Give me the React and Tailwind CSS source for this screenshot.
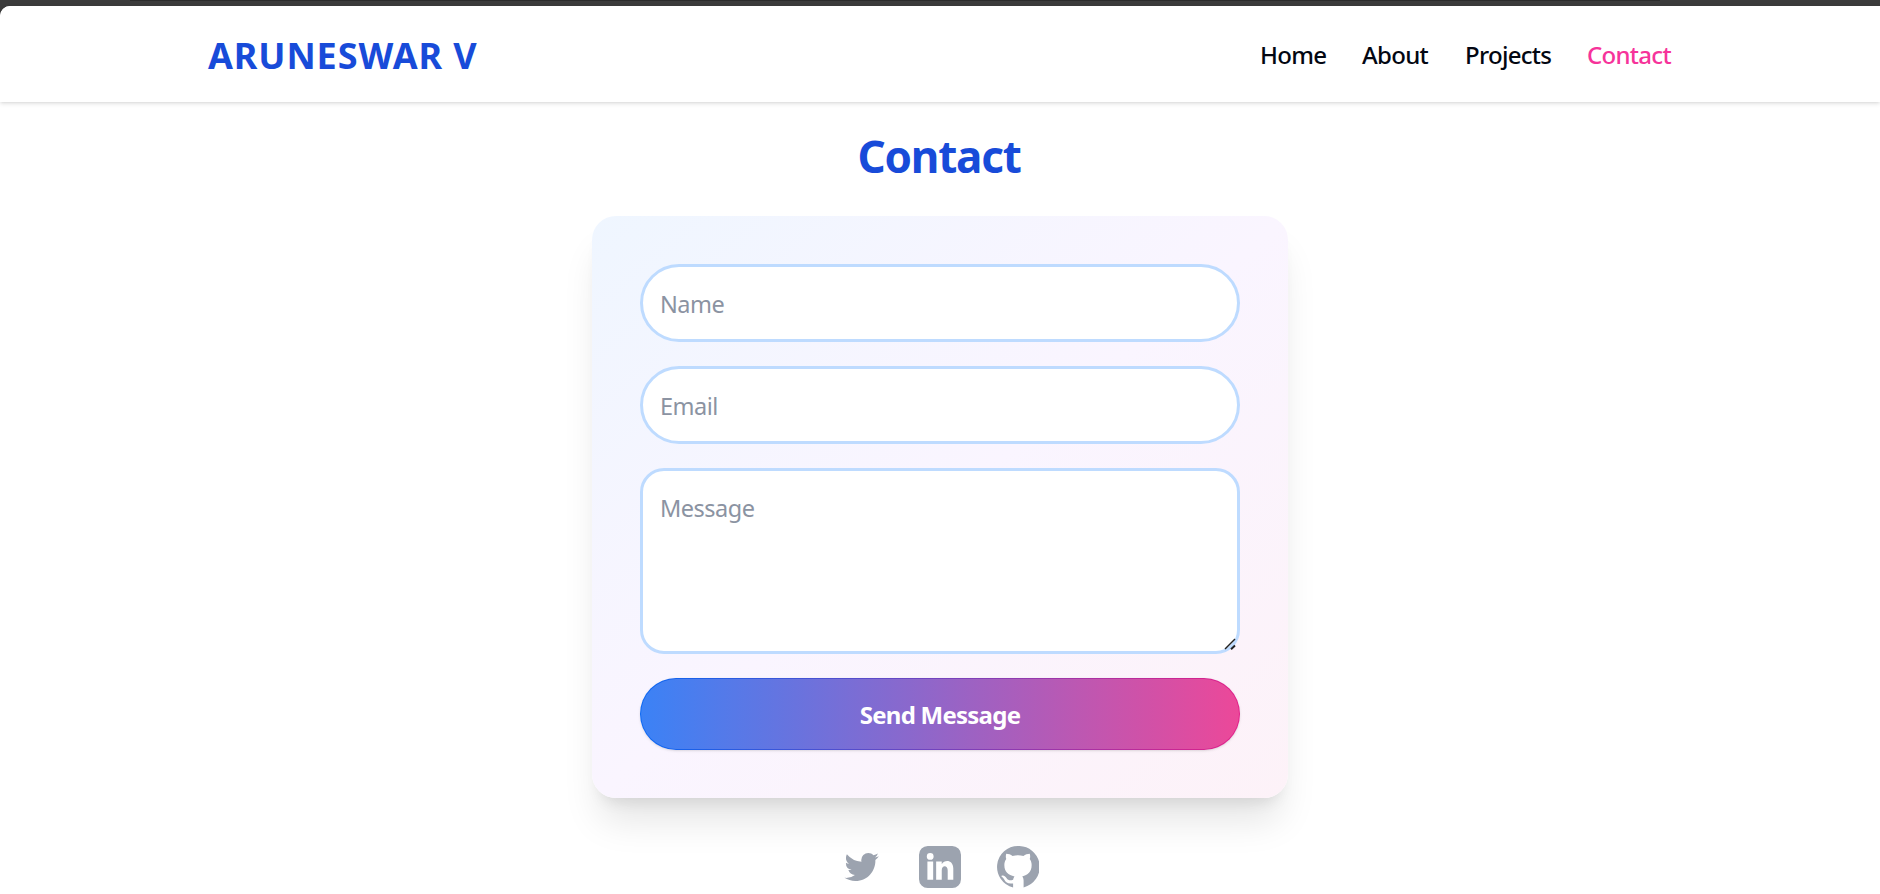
const nav = [
  { label: "Home", cls: "w-[66px]" },
  { label: "About", cls: "w-[67px]" },
  { label: "Projects", cls: "w-[86px]" },
  { label: "Contact", cls: "w-[85px] text-[#f6339a]" },
];

const field =
  "block w-full border-[3px] border-[#bedbff] bg-white px-[17px] text-[23.5px] tracking-[-0.5px] text-[#1e2939] placeholder:text-[#8b93a2] outline-none";

const icons = [
  "M19.633 7.997c.013.175.013.349.013.523 0 5.325-4.053 11.461-11.46 11.461-2.282 0-4.402-.661-6.186-1.809.324.037.636.05.973.05a8.07 8.07 0 0 0 5.001-1.721 4.036 4.036 0 0 1-3.767-2.793c.249.037.499.062.761.062.361 0 .724-.05 1.061-.137a4.027 4.027 0 0 1-3.23-3.953v-.05c.537.299 1.16.486 1.82.511a4.022 4.022 0 0 1-1.796-3.354c0-.748.199-1.434.548-2.032a11.457 11.457 0 0 0 8.306 4.215c-.062-.3-.1-.611-.1-.923a4.026 4.026 0 0 1 4.028-4.028c1.16 0 2.207.486 2.943 1.272a7.957 7.957 0 0 0 2.556-.973 4.02 4.02 0 0 1-1.771 2.22 8.073 8.073 0 0 0 2.319-.624 8.645 8.645 0 0 1-2.019 2.083z",
  "M5 0h14a5 5 0 0 1 5 5v14a5 5 0 0 1-5 5H5a5 5 0 0 1-5-5V5a5 5 0 0 1 5-5zM4.8 8.9v10.4h3.3V8.9zM6.4 4a1.95 1.95 0 1 0 .001 3.901A1.95 1.95 0 0 0 6.4 4zM9.8 8.9v10.4h3.2v-5.5c0-3.1 3.4-3 3.4 0v5.5h3.2v-6.4c0-5-4.9-5.4-6.6-2.5V8.9z",
  "M12 0a12 12 0 0 0-2.8 23.66v-2.3c-2.8.5-4.1-.4-4.9-1.9-.4-.8-.9-1.3-1.4-1.7-.7-.5-.5-1 .4-.9 1 .1 1.7.8 2.2 1.6.9 1.3 2.2 1.4 3.7.8.1-.8.4-1.4.8-1.9-3.6-.6-5.8-2.6-5.8-6.5 0-1.4.4-2.5 1.1-3.4-.4-1-.3-2.1 0-3 1.3 0 2.5.5 3.6 1.2a13 13 0 0 1 6.2 0c1.1-.7 2.3-1.2 3.6-1.2.3.9.4 2 0 3 .7.9 1.1 2 1.1 3.4 0 3.9-2.2 5.9-5.4 6.5.5.6.8 1.4.8 2.4v3.9A12 12 0 0 0 12 0z",
];

export default function App() {
  return (
    <div className="h-[894px] overflow-hidden bg-[#3b3b3b] font-['Noto_Sans','Open_Sans',sans-serif]">
      <div className="h-[6px] pl-[130px]">
        <div className="h-px w-[1530px] bg-[#2b2b2b]" />
      </div>
      <div className="h-[888px] rounded-tl-[10px] bg-white">
        <header className="flex h-24 items-center justify-between rounded-tl-[10px] bg-white px-[208px] shadow-[0_1.5px_4.5px_rgba(0,0,0,0.1),0_1.5px_3px_-1.5px_rgba(0,0,0,0.1)]">
          <div className="pt-1 text-[36px] font-bold tracking-[0.9px] whitespace-nowrap text-[#184bd9]">ARUNESWAR V</div>
          <nav className="flex gap-9 pt-0.5 text-[24px] font-medium tracking-[-0.7px] text-[#030712]">
            {nav.map((n) => (
              <a key={n.label} className={n.cls}>{n.label}</a>
            ))}
          </nav>
        </header>
        <main className="flex flex-col items-center pt-[27px]">
          <h1 className="pr-0.5 text-[44px] leading-[54px] font-bold tracking-[-1.2px] text-[#184bd9]">Contact</h1>
          <form className="mt-[33px] flex h-[582px] w-[696px] flex-col gap-6 rounded-3xl bg-linear-to-br from-[#eff6ff] via-[#faf5ff] to-[#fdf2f8] p-12 shadow-[0_30px_37.5px_-7.5px_rgba(0,0,0,0.1),0_12px_15px_-9px_rgba(0,0,0,0.1)]">
            <input className={field + " h-[78px] rounded-full pt-0.5"} placeholder="Name" />
            <input className={field + " h-[78px] rounded-full pt-0.5"} placeholder="Email" />
            <div className="relative h-[186px]">
              <textarea className={field + " h-[186px] resize-none rounded-3xl pt-[19px] leading-9"} placeholder="Message" />
              <svg viewBox="0 0 12 12" className="absolute right-[4px] bottom-[4px] size-3 fill-none stroke-[#222]">
                <path d="M1 11 11 1" strokeWidth="1.4" />
                <path d="M7 11.3 11 7.5" strokeWidth="1.9" />
              </svg>
            </div>
            <button type="button" className="h-[72px] shrink-0 rounded-full border border-transparent [background:linear-gradient(to_right,#3b82f6,#ec4899)_padding-box,linear-gradient(to_right,#0866f2,#e01f88)_border-box] pt-0.5 text-[24px] font-bold tracking-[-0.75px] text-white shadow">Send Message</button>
          </form>
          <div className="mt-12 flex gap-9 text-[#9ca3af]">
            {icons.map((d, i) => (
              <svg key={i} viewBox="0 0 24 24" className="size-[42px] fill-current"><path fillRule="evenodd" d={d} /></svg>
            ))}
          </div>
        </main>
      </div>
    </div>
  );
}
